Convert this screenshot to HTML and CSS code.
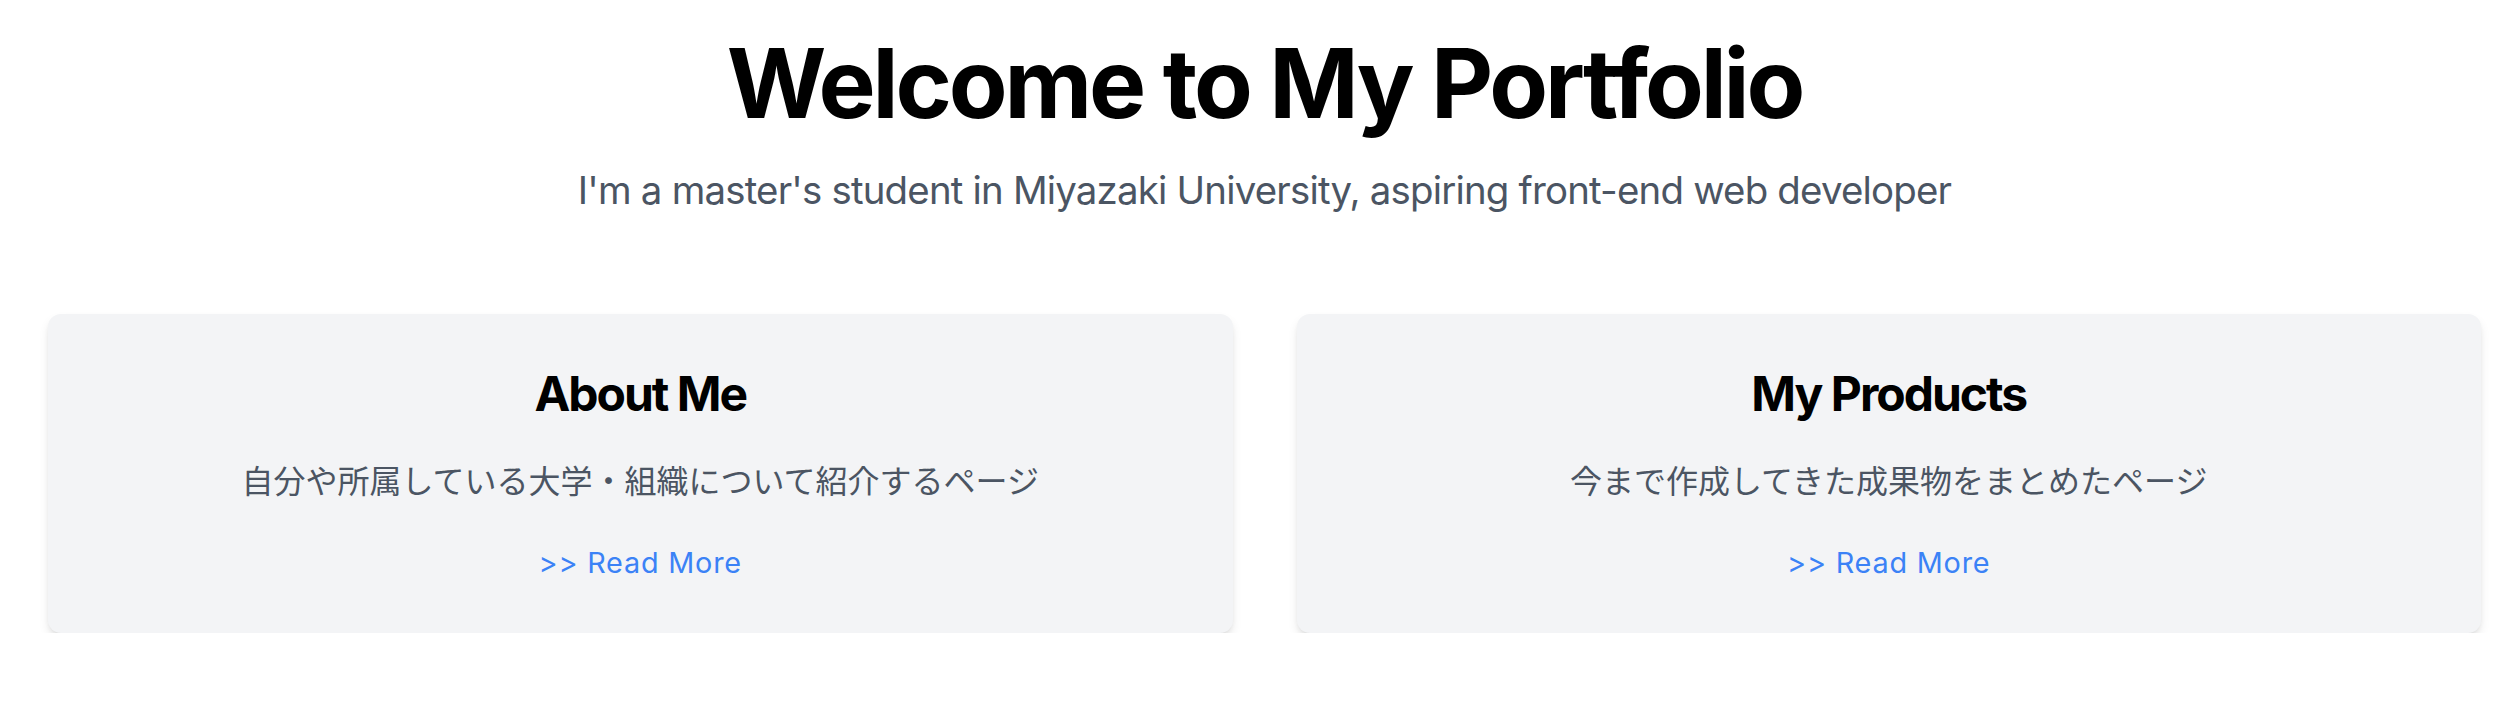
FILE: index.html
```html
<!DOCTYPE html>
<html lang="en">
<head>
<meta charset="utf-8">
<title>Portfolio</title>
<link rel="stylesheet" href="styles.css">
</head>
<body>
<main class="page">
  <header class="hero">
    <h1 class="hero-title">Welcome to My Portfolio</h1>
    <p class="hero-sub">I'm a master's student in Miyazaki University, aspiring front-end web developer</p>
  </header>
  <section class="cards">
    <article class="card">
      <h2 class="card-title">About Me</h2>
      <p class="card-text" lang="ja">自分や所属している大学・組織について紹介するページ</p>
      <a class="card-link" href="#">&gt;&gt; Read More</a>
    </article>
    <article class="card">
      <h2 class="card-title">My Products</h2>
      <p class="card-text" lang="ja">今まで作成してきた成果物をまとめたページ</p>
      <a class="card-link" href="#">&gt;&gt; Read More</a>
    </article>
  </section>
</main>
</body>
</html>
```
FILE: styles.css
```css
* { box-sizing: border-box; }
html, body { margin: 0; padding: 0; background: #ffffff; }
body { font-family: Inter, "Noto Sans", sans-serif; color: #000; }

.page {
  padding: 35px 37px 0 48px;
}

.hero {
  display: flex;
  flex-direction: column;
  align-items: center;
  text-align: center;
}

.hero-title {
  margin: 0;
  font-size: 96px;
  line-height: 96px;
  font-weight: 700;
  letter-spacing: -3.1px;
  color: #000;
}

.hero-sub {
  margin: 34px 0 0;
  font-size: 38.4px;
  line-height: 51px;
  letter-spacing: -0.8px;
  color: #4b5563;
}

.cards {
  margin-top: 98px;
  display: grid;
  grid-template-columns: 1fr 1fr;
  gap: 64px;
}

.card {
  background: #f3f4f6;
  border-radius: 13px;
  box-shadow: 0 6px 12px -2px rgba(0,0,0,0.12), 0 3px 6px -3px rgba(0,0,0,0.12);
  padding: 51px 32px 48px;
  display: flex;
  flex-direction: column;
  align-items: center;
  text-align: center;
}

.card-title {
  margin: 0;
  font-size: 48px;
  line-height: 58px;
  font-weight: 700;
  letter-spacing: -2px;
  color: #000;
}

.card-text {
  margin: 34px 0 0;
  font-family: "Noto Sans CJK JP", sans-serif;
  font-size: 32px;
  line-height: 45px;
  color: #4b5563;
}

.card-link {
  margin-top: 38px;
  font-size: 28.8px;
  line-height: 45px;
  letter-spacing: 0.8px;
  color: #3b82f6;
  text-decoration: none;
}
```
